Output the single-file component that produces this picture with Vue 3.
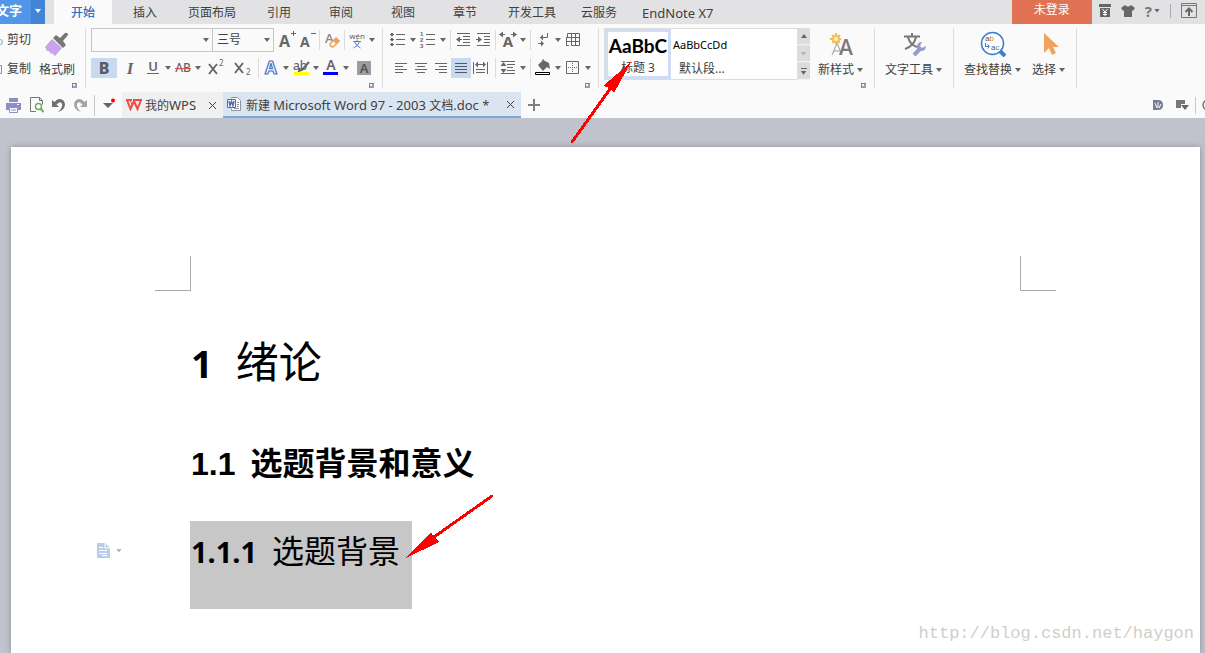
<script setup>
import { ref } from 'vue'

const tabs = ['开始', '插入', '页面布局', '引用', '审阅', '视图', '章节', '开发工具', '云服务', 'EndNote X7']
const activeTab = ref('开始')
const fontName = ref('')
const fontSize = ref('三号')

const g = '#666666'
const icons = {
  grow: `<text x="2" y="17" font-family="Open Sans, sans-serif" font-size="16" font-weight="700" fill="${g}">A</text><path d="M14 3.500h5M16.500 1v5" stroke="${g}"/>`,
  shrink: `<text x="3" y="17" font-family="Open Sans, sans-serif" font-size="14" font-weight="700" fill="${g}">A</text><path d="M14 3.500h5" stroke="${g}"/>`,
  eraser: `<text x="3" y="13" font-family="Open Sans, sans-serif" font-size="13" font-weight="600" fill="#888">A</text><path d="M8 14l6-6 3 3-6 6q-3 0-3-3z" fill="#fff" stroke="#eda35f" stroke-width="1.500"/><path d="M11 11l3.500-3.500 3.500 3.500-3.500 3.500z" fill="#eda35f"/>`,
  wen: `<text x="10" y="9" text-anchor="middle" font-family="Open Sans, sans-serif" font-size="8" fill="#555">wén</text><path d="M6 11.500h8M10 9.500v2M12.500 11.500q-1 4-6 6.500M7.500 11.500q1 4 6 6.500" stroke="#4f82d0" fill="none"/>`,
  bold: `<text x="10" y="16" text-anchor="middle" font-family="Noto Sans, sans-serif" font-size="16" font-weight="800" fill="#5c5c5c">B</text>`,
  italic: `<text x="10" y="16" text-anchor="middle" font-family="Liberation Serif, serif" font-size="17" font-style="italic" font-weight="700" fill="${g}">I</text>`,
  underline: `<text x="10" y="13" text-anchor="middle" font-family="Noto Sans, sans-serif" font-size="13" font-weight="600" fill="${g}">U</text><path d="M4 15.500h12" stroke="${g}"/>`,
  strike: `<text x="10" y="14" text-anchor="middle" font-family="Noto Sans, sans-serif" font-size="12" font-weight="500" fill="${g}">AB</text><path d="M2 10.500h16" stroke="#d9534f"/>`,
  sup: `<path d="M3 6l8 10M11 6L3 16" stroke="${g}" stroke-width="2"/><text x="13" y="8" font-family="Noto Sans, sans-serif" font-size="8" fill="${g}">2</text>`,
  sub: `<path d="M3 5l8 10M11 5L3 15" stroke="${g}" stroke-width="2"/><text x="14" y="17" font-family="Noto Sans, sans-serif" font-size="8" fill="${g}">2</text>`,
  effect: `<text x="10" y="16" text-anchor="middle" font-family="Noto Sans, sans-serif" font-size="17" font-weight="700" fill="#fff" stroke="#4a74c4" stroke-width="1.200">A</text>`,
  highlight: `<text x="2" y="12" font-family="Noto Sans, sans-serif" font-size="12" font-weight="500" fill="${g}">ab</text><path d="M18 4l-7 8-3 1 1-3" fill="none" stroke="${g}" stroke-width="2"/><path d="M3 14h15v3H3z" fill="#ff0"/>`,
  color: `<text x="10" y="12" text-anchor="middle" font-family="Noto Sans, sans-serif" font-size="14" font-weight="600" fill="${g}">A</text><path d="M2 14h15v3H2z" fill="#00f"/>`,
  shade: `<path d="M3 3h14v14H3z" fill="#9a9da2"/><text x="10" y="15" text-anchor="middle" font-family="Noto Sans, sans-serif" font-size="13" font-weight="600" fill="#555">A</text>`,
  bullets: `<path d="M8 4.500h9M8 9.500h9M8 14.500h9" stroke="${g}"/><path d="M3 3h2v3H3zM3 8h2v3H3zM3 13h2v3H3zM2 4h4v1H2zM2 9h4v1H2zM2 14h4v1H2z" fill="${g}"/>`,
  numbers: `<path d="M8 4.500h9M8 9.500h9M8 14.500h9" stroke="${g}"/><g font-family="Liberation Sans, sans-serif" font-size="6" font-weight="700" fill="${g}"><text x="2" y="6">1</text><text x="2" y="12">2</text><text x="2" y="18">3</text></g>`,
  outdent: `<path d="M4 3.500h13M10 6.500h7M10 9.500h7M10 12.500h7M4 15.500h13M4 9.500h5" stroke="${g}"/><path d="M3 9.500l4-3v6z" fill="${g}"/>`,
  indent: `<path d="M4 3.500h13M11 6.500h6M11 9.500h6M11 12.500h6M4 15.500h13M3 9.500h5" stroke="${g}"/><path d="M9 9.500l-4-3v6z" fill="${g}"/>`,
  charscale: `<text x="10" y="17" text-anchor="middle" font-family="Noto Sans, sans-serif" font-size="15" font-weight="700" fill="${g}">A</text><path d="M3 4.500h4M13 4.500h4" stroke="${g}"/><path d="M1 4.500l4-3v6zM19 4.500l-4-3v6z" fill="${g}"/>`,
  marks: `<path d="M14.500 3v4.500H9M5 13.500h5" stroke="${g}" fill="none"/><path d="M7 7.500l3-3v6zM11 13.500l-3-3v6z" fill="${g}"/>`,
  table: `<path d="M4.500 7V3.500h12v12H8.500V3M3 7.500h14M3.500 7v9M3 11.500h14M12.500 3v13M3 15.500h3" stroke="${g}" fill="none"/>`,
  left: `<path d="M4 5.500h12M4 8.500h8M4 11.500h12M4 14.500h8" stroke="${g}"/>`,
  center: `<path d="M4 5.500h12M6 8.500h8M4 11.500h12M6 14.500h8" stroke="${g}"/>`,
  right: `<path d="M4 5.500h12M8 8.500h8M4 11.500h12M8 14.500h8" stroke="${g}"/>`,
  justify: `<path d="M4 5.500h12M4 8.500h12M4 11.500h12M4 14.500h12" stroke="#4e5a6a"/>`,
  distribute: `<path d="M2.500 4v12M16.500 4v12M5 11.500h9M5 14.500h9M5 6.500h9" stroke="${g}"/><path d="M4 6.500l3-3v6zM15 6.500l-3-3v6z" fill="${g}"/>`,
  spacing: `<path d="M3 3.500h14M9 6.500h8M9 9.500h6M9 12.500h8M3 15.500h14" stroke="${g}"/><path d="M5.500 4l3 4h-6zM5.500 15l3-4h-6z" fill="${g}"/>`,
  bucket: `<path d="M5 7l5-5 6 3 1 6-3-2-4 4z" fill="${g}"/><path d="M10 1v5" stroke="${g}"/><path d="M2.500 14.500h14v2h-14z" fill="#fff" stroke="#000"/>`,
  borders: `<path d="M3.500 3.500h12v12h-12z" fill="none" stroke="${g}"/><path d="M9.500 5v9M5 9.500h9" stroke="${g}" stroke-dasharray="1 1"/>`
}

const fontRow1 = [
  { id: 'grow', label: '增大字号' }, { id: 'shrink', label: '减小字号' }, { sep: true },
  { id: 'eraser', label: '清除格式' }, { sep: true }, { id: 'wen', label: '拼音指南', split: true }
]
const fontRow2 = [
  { id: 'bold', label: '加粗', wide: true, on: true }, { id: 'italic', label: '倾斜', wide: true },
  { id: 'underline', label: '下划线', split: true }, { id: 'strike', label: '删除线', split: true },
  { id: 'sup', label: '上标', wide: true }, { id: 'sub', label: '下标', wide: true }, { sep: true },
  { id: 'effect', label: '文字效果', split: true }, { id: 'highlight', label: '突出显示', split: true },
  { id: 'color', label: '字体颜色', split: true }, { id: 'shade', label: '字符底纹', wide: true }
]
const paraRow1 = [
  { id: 'bullets', label: '项目符号', split: true }, { id: 'numbers', label: '编号', split: true }, { sep: true },
  { id: 'outdent', label: '减少缩进' }, { id: 'indent', label: '增加缩进' }, { sep: true },
  { id: 'charscale', label: '中文版式', split: true }, { sep: true },
  { id: 'marks', label: '显示标记', split: true }, { id: 'table', label: '插入表格' }
]
const paraAlign = [
  { id: 'left', label: '左对齐' }, { id: 'center', label: '居中' }, { id: 'right', label: '右对齐' },
  { id: 'justify', label: '两端对齐', on: true }, { id: 'distribute', label: '分散对齐' }
]
const paraRow2 = [
  { sep: true }, { id: 'spacing', label: '行距', split: true }, { sep: true },
  { id: 'bucket', label: '底纹颜色', split: true }, { id: 'borders', label: '边框', split: true }
]
</script>

<template>
  <div class="app">
    <header class="menubar">
      <button class="app-menu"><span class="app-name">文字</span><span class="app-arrow"><i class="caret light"></i></span></button>
      <nav class="tabs">
        <button v-for="t in tabs" :key="t" class="tab" :class="{ active: t === activeTab, latin: t.startsWith('End') }" @click="activeTab = t">{{ t }}</button>
      </nav>
      <button class="login">未登录</button>
      <div class="menu-icons">
        <button aria-label="稻壳商城"><svg width="12" height="13" viewBox="0 0 12 13"><path d="M0 0h12v3H0zM1 4h10v9H1z" fill="#666" /><path d="M3.500 5l2.500 3 2.500-3M6 8v4M4 8.500h4M4 10.500h4" stroke="#fff" fill="none" /></svg></button>
        <button aria-label="皮肤"><svg width="14" height="12" viewBox="0 0 14 12"><path d="M4 0q3 3 6 0l4 3-2 3-1-1v7H3V5L2 6 0 3z" fill="#666" /></svg></button>
        <button class="help" aria-label="帮助"><span>?</span><i class="caret"></i></button>
        <i class="bar"></i>
        <button aria-label="收起功能区"><svg width="16" height="15" viewBox="0 0 16 15"><path d="M.5.5h15v14H.5zM0 2.500h16" stroke="#777" fill="none" /><path d="M8 13V6M4.500 9L8 5.500 11.500 9" stroke="#666" stroke-width="2" fill="none" /></svg></button>
      </div>
    </header>

    <section class="ribbon">
      <div class="group clip">
        <div class="clip-list">
          <button><svg class="edge" width="4" height="12" viewBox="0 0 4 12"><circle cx="0" cy="8" r="2.500" fill="none" stroke="#8aa4d6" /></svg>剪切</button>
          <button><svg class="edge" width="4" height="12" viewBox="0 0 4 12"><path d="M0 2.500h1.500v8H0" fill="none" stroke="#6f92d2" /></svg>复制</button>
        </div>
        <button class="big painter">
          <svg width="26" height="26" viewBox="0 0 26 26"><path d="M8 8l10 9-7 8-3-3-1 1-2-3-2 0-2-4z" fill="#c9a2ee" /><path d="M9 7l3-3 4 3 5-5q3-1 3 2l-5 6 3 4-3 3z" fill="#777" /></svg>
          <span>格式刷</span>
        </button>
        <button class="launcher" aria-label="剪贴板设置"></button>
      </div>

      <div class="group font">
        <div class="row">
          <label class="combo name"><select v-model="fontName" aria-label="字体"><option value=""></option><option>宋体</option></select><i class="caret"></i></label>
          <label class="combo size"><select v-model="fontSize" aria-label="字号"><option>三号</option><option>四号</option></select><i class="caret"></i></label>
          <div class="tools lead">
            <template v-for="(t, i) in fontRow1" :key="i">
              <i v-if="t.sep" class="sep"></i>
              <button v-else class="tool" :class="{ split: t.split }" :aria-label="t.label"><svg width="20" height="20" viewBox="0 0 20 20" v-html="icons[t.id]"></svg><i v-if="t.split" class="caret"></i></button>
            </template>
          </div>
        </div>
        <div class="row low">
          <template v-for="(t, i) in fontRow2" :key="i">
            <i v-if="t.sep" class="sep roomy"></i>
            <button v-else class="tool" :class="{ split: t.split, wide: t.wide, on: t.on }" :aria-label="t.label"><svg width="20" height="20" viewBox="0 0 20 20" v-html="icons[t.id]"></svg><i v-if="t.split" class="caret"></i></button>
          </template>
        </div>
        <button class="launcher" aria-label="字体设置"></button>
      </div>

      <div class="group para">
        <div class="row">
          <template v-for="(t, i) in paraRow1" :key="i">
            <i v-if="t.sep" class="sep"></i>
            <button v-else class="tool" :class="{ split: t.split }" :aria-label="t.label"><svg width="20" height="20" viewBox="0 0 20 20" v-html="icons[t.id]"></svg><i v-if="t.split" class="caret"></i></button>
          </template>
        </div>
        <div class="row low">
          <div class="align">
            <button v-for="t in paraAlign" :key="t.id" class="tool" :class="{ on: t.on }" :aria-label="t.label"><svg width="20" height="20" viewBox="0 0 20 20" v-html="icons[t.id]"></svg></button>
          </div>
          <template v-for="(t, i) in paraRow2" :key="i">
            <i v-if="t.sep" class="sep"></i>
            <button v-else class="tool" :class="{ split: t.split }" :aria-label="t.label"><svg width="20" height="20" viewBox="0 0 20 20" v-html="icons[t.id]"></svg><i v-if="t.split" class="caret"></i></button>
          </template>
        </div>
        <button class="launcher" aria-label="段落设置"></button>
      </div>

      <div class="group styles">
        <div class="gallery">
          <button class="style-card picked"><b>AaBbC</b><span>标题 3</span></button>
          <button class="style-card"><em>AaBbCcDd</em><span>默认段...</span></button>
          <div class="scroller">
            <button aria-label="上一行"><i class="caret up"></i></button>
            <button aria-label="下一行"><i class="caret dim"></i></button>
            <button aria-label="更多样式"><i class="more"></i><i class="caret"></i></button>
          </div>
        </div>
        <button class="big newstyle">
          <svg width="26" height="26" viewBox="0 0 26 26"><path d="M4 24l5-12 5 12M6 20h6" stroke="#9a9a9a" fill="none" /><text x="11" y="24" font-family="Open Sans, sans-serif" font-size="21" font-weight="600" fill="#7c7c7c">A</text><path d="M8 2v12M2 8h12M4 4l8 8M12 4l-8 8" stroke="#f2b84b" stroke-width="2" stroke-dasharray="2 1" /><circle cx="8" cy="8" r="4" fill="#f5bf55" /><circle cx="8" cy="8" r="2" fill="#fff3d0" /></svg>
          <span>新样式<i class="caret"></i></span>
        </button>
        <button class="launcher" aria-label="样式设置"></button>
      </div>

      <div class="group texttools">
        <button class="big">
          <svg width="26" height="26" viewBox="0 0 26 26"><path d="M3 5.500h16M11 2v3M15 6q-2 9-11 12M7 6q2 8 9 10" stroke="#777" stroke-width="2" fill="none" /><path d="M13 24l6-6" stroke="#939bcf" stroke-width="4" /><path d="M16 16q0-5 5-5l-2 4 2 2 4-2q0 5-5 5-4 0-4-4z" fill="#939bcf" /></svg>
          <span>文字工具<i class="caret"></i></span>
        </button>
      </div>

      <div class="group find">
        <button class="big">
          <svg width="26" height="26" viewBox="0 0 26 26"><circle cx="12.500" cy="12.500" r="11" fill="#fff" stroke="#3a7fd0" stroke-width="1.500" /><path d="M20 20l5 5" stroke="#3a7fd0" stroke-width="4" /><g font-family="Liberation Sans, sans-serif" font-size="8"><text x="5" y="10" fill="#555">a<tspan fill="#d87a3a">b</tspan></text><text x="11" y="19" fill="#555">a<tspan fill="#3a7fd0">c</tspan></text></g><path d="M5.500 12v3.500H9M7.500 13.500l2 2-2 2" stroke="#3a7fd0" fill="none" /></svg>
          <span>查找替换<i class="caret"></i></span>
        </button>
        <button class="big">
          <svg width="26" height="26" viewBox="0 0 26 26"><path d="M8 2v20l5-5 3 7 4-2-3-6h6z" fill="#f0a35e" /></svg>
          <span>选择<i class="caret"></i></span>
        </button>
      </div>
    </section>

    <section class="docbar">
      <div class="quick">
        <button aria-label="打印"><svg width="16" height="15" viewBox="0 0 16 15"><path d="M3 0h9v4H3zM0 5h15v7h-3V9H3v3H0z" fill="#8d8ec9" /><path d="M3.500 9.500h8v5h-8zM5 12h5" fill="none" stroke="#8d8ec9" /><path d="M11 6h2v1h-2z" fill="#fff" /></svg></button>
        <button aria-label="打印预览"><svg width="14" height="16" viewBox="0 0 14 16"><path d="M6 14.500H.5V.5h9l3 3v4M9.500.5v3h3" fill="none" stroke="#777" /><circle cx="8.500" cy="9.500" r="3" fill="#fff" stroke="#6fae55" stroke-width="1.500" /><path d="M10.500 11.500l3 3.500" stroke="#6fae55" stroke-width="2" /></svg></button>
        <button aria-label="撤销"><svg width="14" height="14" viewBox="0 0 14 14"><path d="M0 2v7h7L4.500 6.500Q9 2.500 10 6t-4 8q7-2 7-8Q12 1 7 1 4.500 1.500 2.500 4z" fill="#707070" /></svg></button>
        <button aria-label="恢复"><svg width="14" height="14" viewBox="0 0 14 14"><path d="M13 2v7H6l2.500-2.500Q4 2.500 3 6t4 8Q0 12 0 6 1 1 6 1q2.500.5 4.500 3z" fill="#a4a4a4" /></svg></button>
      </div>
      <i class="bar"></i>
      <button class="quick-more" aria-label="自定义快速访问"><svg width="14" height="14" viewBox="0 0 14 14"><path d="M0 5h10l-5 5z" fill="#666" /><circle cx="10" cy="2.500" r="2" fill="#f00" /></svg></button>
      <div class="doc-tab home">
        <svg width="16" height="12" viewBox="0 0 16 12"><path d="M0 1h6M1 1l3.500 9L8 2l3.500 8L15 1M7 1h9" fill="none" stroke="#ee4b4b" stroke-width="2" /><path d="M4 1l2.500 6M9 4l2 4" stroke="#ee4b4b" /></svg>
        <a href="#">我的<span class="latin">WPS</span></a>
        <button class="close" aria-label="关闭我的WPS"><svg width="9" height="9" viewBox="0 0 9 9"><path d="M1 1l7 7M8 1L1 8" stroke="#444" /></svg></button>
      </div>
      <div class="doc-tab current">
        <svg width="14" height="14" viewBox="0 0 14 14"><path d="M4.500 1.500v-1h6l3 3v10h-9v-2" fill="#fff" stroke="#8c94a4" /><path d="M10 5.500h2M10 7.500h2M10 9.500h2M7 11.500h5" stroke="#8c94a4" /><path d="M.5 2.500h8v8h-8z" fill="#fff" stroke="#4a6fb8" /><path d="M2 4l1 4.500 1.500-4 1.500 4L7 4" fill="none" stroke="#4a6fb8" stroke-width="1.500" /></svg>
        <a href="#">新建 <span class="latin">Microsoft Word 97 - 2003 </span>文档<span class="latin">.doc *</span></a>
        <button class="close" aria-label="关闭文档"><svg width="9" height="9" viewBox="0 0 9 9"><path d="M1 1l7 7M8 1L1 8" stroke="#444" /></svg></button>
      </div>
      <button class="add" aria-label="新建文档"><svg width="12" height="12" viewBox="0 0 12 12"><path d="M0 6h12M6 0v12" stroke="#808080" stroke-width="2" /></svg></button>
      <div class="doc-right">
        <button aria-label="稻壳"><svg width="10" height="10" viewBox="0 0 10 10"><path d="M0 0h5q5 0 5 5t-5 5H0z" fill="#747d92" /><path d="M2 3l2 5M5 2v6M8 4L6 8" stroke="#fff" /></svg></button>
        <button aria-label="窗口列表"><svg width="13" height="11" viewBox="0 0 13 11"><path d="M0 0h9v4H5v4H0z" fill="#777" /><path d="M5 5h8L9 10z" fill="#666" /></svg></button>
        <i class="bar"></i>
        <svg width="3" height="12" viewBox="0 0 3 12"><circle cx="6" cy="6" r="5" fill="none" stroke="#777" stroke-width="1.500" /></svg>
      </div>
    </section>

    <main class="canvas">
      <article class="page">
        <div class="corners"><i class="corner"></i><i class="corner end"></i></div>
        <div class="content">
          <h1><span class="num">1</span><span>绪论</span></h1>
          <h2><span class="num">1.1</span><span>选题背景和意义</span></h2>
          <h3><span class="num">1.1.1</span><span>选题背景</span></h3>
        </div>
        <button class="para-handle" aria-label="段落布局"><svg width="13" height="15" viewBox="0 0 13 15"><path d="M0 0h8l5 5v10H0z" fill="#b9cde9" /><path d="M8 0v5h5M2 4.500h4M2 7.500h8M2 10.500h8M5 12.500h5" stroke="#fff" fill="none" /></svg><i class="caret dim"></i></button>
        <p class="watermark">http://blog.csdn.net/haygon</p>
      </article>
    </main>

    <svg class="annotations" width="600" height="600" viewBox="0 0 600 600" shape-rendering="crispEdges" aria-hidden="true">
      <path d="M572 142L610 89M492 496L434 537" stroke="#f00" stroke-width="3" stroke-linecap="round" />
      <path d="M631 62L603 86l7 2 4 5zM406 558l25-26 3 5 5 5z" fill="#f00" />
    </svg>
  </div>
</template>

<style>
html, body, #app { height: 100%; }
body { margin: 0; overflow: hidden; }
</style>

<style scoped>
.app {
  position: relative; display: flex; flex-direction: column; min-height: 100%; overflow: hidden;
  background: #c0c3cc; color: #404040;
  font: 12px/16px "Noto Sans", "Noto Sans CJK SC", sans-serif;
}
button, select { margin: 0; padding: 0; border: 0; background: none; font: inherit; color: inherit; }
i { font-style: normal; }
svg { display: block; flex: none; }
a { color: inherit; text-decoration: none; white-space: nowrap; }
.latin { font-size: 13px; }
.caret { flex: none; width: 6px; height: 4px; background: #666; clip-path: polygon(0 0, 100% 0, 50% 100%); }
.caret.light { background: #fff; }
.caret.dim { background: #b5b5b5; }
.caret.up { transform: rotate(180deg); }
.bar { width: 1px; background: #c8c8c8; }

.menubar { display: flex; height: 24px; background: #e2e2e4; }
.app-menu { display: flex; width: 45px; background: linear-gradient(90deg, #5196e8 31px, #4285d6 31px); color: #fff; font-size: 13px; font-weight: 600; line-height: 20px; }
.app-name { display: flex; justify-content: flex-end; width: 22px; padding-right: 9px; white-space: nowrap; }
.app-arrow { display: flex; flex: 1; height: 22px; align-items: center; justify-content: center; }
.tabs { display: flex; margin-left: 9px; }
.tab { min-width: 62px; padding: 2px 12px 0; white-space: nowrap; }
.tab.active { min-width: 58px; margin-right: 2px; background: #fafafa; color: #2f6fc0; font-weight: 500; }
.login { width: 80px; margin-left: auto; padding-bottom: 4px; background: #e07152; color: #fff; }
.menu-icons { display: flex; align-items: center; gap: 10px; height: 21px; padding: 0 8px 0 7px; }
.menu-icons .bar { height: 14px; background: #aaa; }
.help { display: flex; align-items: center; gap: 2px; font-size: 15px; font-weight: 700; color: #777; }

.ribbon { display: flex; height: 68px; background: #fafafa; }
.group { position: relative; height: 60px; margin-top: 4px; border-right: 1px solid #dcdcdc; box-sizing: border-box; flex: none; }
.launcher { position: absolute; right: 8px; bottom: 0; width: 5px; height: 5px; border: solid #7a7fa0; border-width: 1px 0 0 1px; box-shadow: inset -2px -2px 0 #9a9db8; }
.row { display: flex; align-items: center; height: 24px; }
.row.low { height: 20px; margin-top: 6px; }
.tools, .align { display: flex; align-items: center; }
.tool { display: flex; align-items: center; justify-content: center; width: 20px; height: 20px; }
.tool svg { overflow: visible; }
.tool.wide { width: 26px; }
.tool.split { width: 30px; justify-content: flex-start; }
.tool.split .caret { margin-left: 2px; }
.tool.on { background: #c8d9f0; }
.sep { width: 1px; height: 20px; margin: 0 2px; background: #dcdcdc; }
.sep.roomy { margin: 0 2px 0 3px; }

.clip { display: flex; width: 86px; }
.clip-list { display: flex; flex-direction: column; gap: 5px; }
.clip-list button { display: flex; align-items: center; gap: 3px; height: 24px; white-space: nowrap; }
.big { display: flex; flex-direction: column; align-items: center; gap: 3px; padding-top: 3px; height: 54px; white-space: nowrap; }
.big span { display: flex; align-items: center; line-height: 20px; }
.big .caret { margin-left: 3px; }
.painter { margin-left: 8px; }

.font { width: 297px; padding-left: 5px; }
.combo { position: relative; display: flex; align-items: center; height: 24px; box-sizing: border-box; border: 1px solid #c6c6c6; background: #fafafa; }
.combo.name { width: 122px; }
.combo.size { width: 61px; border-left: 0; }
.combo select { width: 100%; height: 100%; padding-left: 4px; appearance: none; outline: 0; }
.combo .caret { position: absolute; right: 3px; pointer-events: none; }
.lead { padding-left: 3px; }
.para { width: 216px; padding-left: 5px; }
.align { width: 102px; padding-left: 3px; }

.styles { display: flex; width: 276px; padding-left: 5px; }
.gallery { display: flex; width: 206px; height: 52px; box-sizing: border-box; border: 1px solid #dcdcdc; border-right: 0; background: #fff; }
.style-card { display: flex; flex-direction: column; align-items: flex-start; padding-left: 2px; width: 62px; white-space: nowrap; }
.style-card b { font: 700 19px/30px Lato, sans-serif; color: #000; }
.style-card em { font: 11px/32px "Noto Sans", sans-serif; color: #000; }
.style-card span { padding-left: 6px; line-height: 16px; }
.style-card.picked { width: 66px; flex: none; align-items: center; padding: 0; border: 3px solid #d0dcf3; box-sizing: border-box; }
.style-card.picked span { padding: 0; }
.style-card.picked b { line-height: 28px; }
.scroller { display: flex; flex-direction: column; width: 13px; margin: -1px 0 -1px auto; background: #e2e2e2; gap: 1px; }
.scroller button { display: flex; flex: 1; flex-direction: column; align-items: center; justify-content: center; gap: 2px; background: #dcdcdc; border-bottom: 1px solid #f2f2f2; }
.more { width: 6px; height: 1px; background: #666; }
.newstyle { margin-left: 8px; }
.texttools { width: 79px; padding-left: 10px; }
.find { display: flex; gap: 11px; width: 123px; padding-left: 10px; }

.docbar { display: flex; align-items: center; height: 26px; background: #fafafa; }
.quick { display: flex; align-items: center; gap: 8px; padding-left: 6px; }
.docbar .bar { height: 21px; margin-left: 6px; }
.quick-more { width: 14px; margin: 0 5px 0 8px; }
.doc-tab { display: flex; align-items: center; height: 26px; box-sizing: border-box; padding: 0 6px 0 4px; background: #f0f0f0; }
.doc-tab.home { width: 101px; gap: 3px; }
.doc-tab.current { width: 298px; gap: 5px; background: #dbe5f1; border-bottom: 2px solid #79a7dc; }
.close { margin-left: auto; }
.doc-tab.current a { padding-top: 2px; }
.add { margin-left: 7px; }
.doc-right { display: flex; align-items: center; margin-left: auto; gap: 6px; }
.doc-right button { margin-right: 7px; }
.doc-right .bar { height: 17px; margin-left: -7px; }

.canvas { display: flex; flex: 1; padding: 29px 5px 0 11px; }
.page { position: relative; flex: 1; background: #fff; box-shadow: 0 0 6px #8e909a; padding-top: 109px; }
.corners { display: flex; justify-content: space-between; padding: 0 144px; }
.corner { width: 35px; height: 34px; border: solid #aaa; border-width: 0 1px 1px 0; }
.corner.end { border-width: 0 0 1px 1px; }
.content { padding-left: 179px; color: #000; }
h1, h2, h3 { display: flex; align-items: baseline; margin: 0; padding-left: 1px; white-space: nowrap; }
h1 { margin-top: 38px; font: 400 43px/60px "Noto Sans CJK SC", sans-serif; }
h1 .num { margin-right: 23px; font: 700 38px/60px "Noto Sans", sans-serif; }
h2 { margin-top: 44px; font: 700 32px/48px "Noto Sans CJK SC", sans-serif; }
h2 .num { margin-right: 15px; font: 700 32px/48px "Liberation Sans", sans-serif; }
h3 { width: 222px; height: 88px; margin-top: 33px; background: #c7c7c7; box-sizing: border-box; padding-top: 4px; font: 400 32px/48px "Noto Sans CJK SC", sans-serif; }
h3 .num { margin-right: 15px; font: 700 29px/48px "Noto Sans", sans-serif; }
.para-handle { position: absolute; left: 86px; top: 396px; display: flex; align-items: center; gap: 6px; }
.watermark { position: absolute; right: 6px; top: 475px; margin: 0; font: 17px/24px "Liberation Mono", monospace; color: #cfcfc8; }
.annotations { position: absolute; left: 0; top: 0; overflow: visible; pointer-events: none; }
</style>
